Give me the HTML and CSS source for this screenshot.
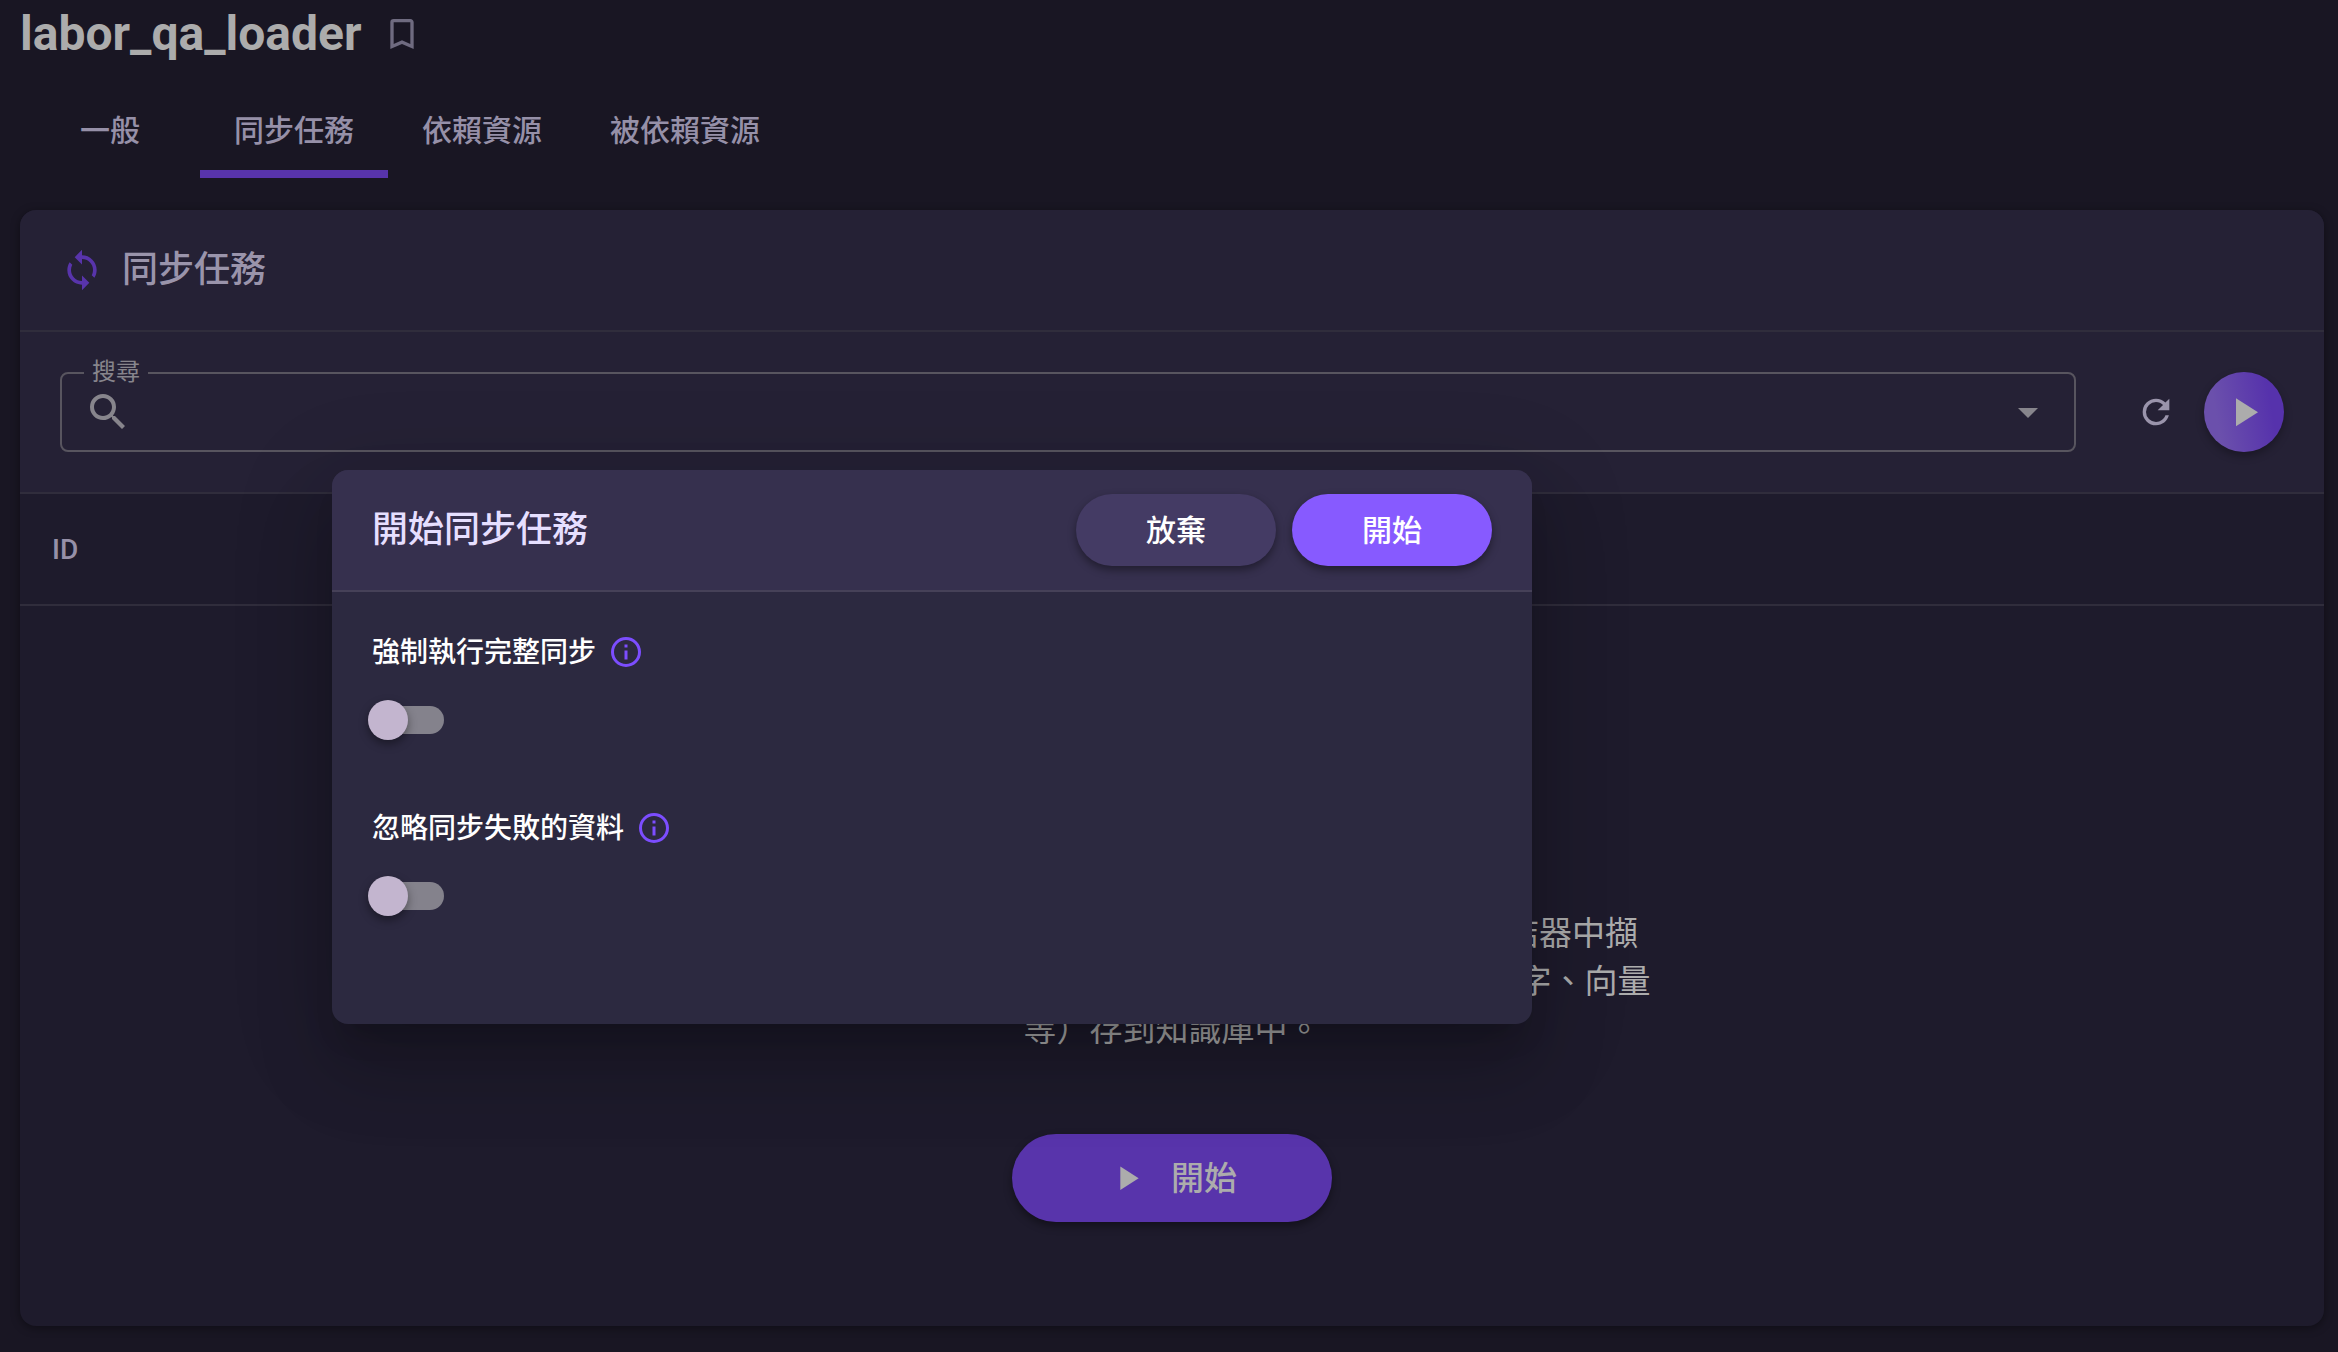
FILE: index.html
```html
<!DOCTYPE html>
<html lang="zh-Hant">

<head>
    <meta charset="UTF-8">
    <meta name="viewport" content="width=device-width, initial-scale=1.0">
    <title>labor_qa_loader</title>
    <link rel="stylesheet" href="styles.css">
</head>

<body>
    <header class="page-header">
        <h1>labor_qa_loader</h1>
        <button class="icon-btn bookmark" aria-label="書籤">
            <svg class="icon icon-40" viewBox="0 0 24 24"><path d="M17,18L12,15.82L7,18V5H17M17,3H7A2,2 0 0,0 5,5V21L12,18L19,21V5C19,3.89 18.1,3 17,3Z"/></svg>
        </button>
    </header>

    <nav class="tabs">
        <a href="#general">一般</a>
        <a href="#sync" class="active">同步任務</a>
        <a href="#deps">依賴資源</a>
        <a href="#dependents">被依賴資源</a>
    </nav>

    <main class="card">
        <div class="card-header">
            <svg class="icon icon-44 sync" viewBox="0 0 24 24"><path d="M12,18A6,6 0 0,1 6,12C6,11 6.25,10.03 6.7,9.2L5.24,7.74C4.46,8.97 4,10.43 4,12A8,8 0 0,0 12,20V23L16,19L12,15M12,4V1L8,5L12,9V6A6,6 0 0,1 18,12C18,13 17.75,13.97 17.3,14.8L18.76,16.26C19.54,15.03 20,13.57 20,12A8,8 0 0,0 12,4Z"/></svg>
            <h2>同步任務</h2>
        </div>

        <div class="toolbar">
            <div class="search">
                <label for="search">搜尋</label>
                <svg class="icon icon-48" viewBox="0 0 24 24"><path d="M9.5,3A6.5,6.5 0 0,1 16,9.5C16,11.11 15.41,12.59 14.44,13.73L14.71,14H15.5L20.5,19L19,20.5L14,15.5V14.71L13.73,14.44C12.59,15.41 11.11,16 9.5,16A6.5,6.5 0 0,1 3,9.5A6.5,6.5 0 0,1 9.5,3M9.5,5C7,5 5,7 5,9.5C5,12 7,14 9.5,14C12,14 14,12 14,9.5C14,7 12,5 9.5,5Z"/></svg>
                <input type="text" id="search" name="search">
                <button class="icon-btn caret" aria-label="展開">
                    <svg class="icon icon-48" viewBox="0 0 24 24"><path d="M7,10L12,15L17,10H7Z"/></svg>
                </button>
            </div>
            <button class="icon-btn refresh" aria-label="重新整理">
                <svg class="icon icon-40" viewBox="0 0 24 24"><path d="M17.65,6.35C16.2,4.9 14.21,4 12,4A8,8 0 0,0 4,12A8,8 0 0,0 12,20C15.73,20 18.84,17.45 19.73,14H17.65C16.83,16.33 14.61,18 12,18A6,6 0 0,1 6,12A6,6 0 0,1 12,6C13.66,6 15.14,6.69 16.22,7.78L13,11H20V4L17.65,6.35Z"/></svg>
            </button>
            <button class="icon-btn run" aria-label="執行">
                <svg class="icon icon-48" viewBox="0 0 24 24"><path d="M8,5.14V19.14L19,12.14L8,5.14Z"/></svg>
            </button>
        </div>

        <table class="tasks">
            <thead>
                <tr>
                    <th scope="col">ID</th>
                </tr>
            </thead>
        </table>

        <div class="empty">
            <p>同步任務會依照資料載入器的設定， 從外部資料來源連結器中擷<br>取資料，經過處理與轉換之後，將處理後的結果（包含文字、向量<br>等）存到知識庫中。</p>
            <button class="start-btn">
                <svg class="icon icon-40" viewBox="0 0 24 24"><path d="M8,5.14V19.14L19,12.14L8,5.14Z"/></svg>
                <span>開始</span>
            </button>
        </div>
    </main>

    <dialog class="modal" open aria-labelledby="modalTitle">
        <div class="modal-header">
            <h2 id="modalTitle">開始同步任務</h2>
            <button class="btn">放棄</button>
            <button class="btn btn-primary">開始</button>
        </div>
        <div class="modal-body">
            <div class="field">
                <div class="field-label">
                    <label for="fullSync">強制執行完整同步</label>
                    <svg class="icon icon-36" viewBox="0 0 24 24"><path d="M11,9H13V7H11M12,20C7.59,20 4,16.41 4,12C4,7.59 7.59,4 12,4C16.41,4 20,7.59 20,12C20,16.41 16.41,20 12,20M12,2A10,10 0 0,0 2,12A10,10 0 0,0 12,22A10,10 0 0,0 22,12A10,10 0 0,0 12,2M11,17H13V11H11V17Z"/></svg>
                </div>
                <input type="checkbox" class="switch" id="fullSync" name="fullSync">
            </div>
            <div class="field">
                <div class="field-label">
                    <label for="ignoreFailed">忽略同步失敗的資料</label>
                    <svg class="icon icon-36" viewBox="0 0 24 24"><path d="M11,9H13V7H11M12,20C7.59,20 4,16.41 4,12C4,7.59 7.59,4 12,4C16.41,4 20,7.59 20,12C20,16.41 16.41,20 12,20M12,2A10,10 0 0,0 2,12A10,10 0 0,0 12,22A10,10 0 0,0 22,12A10,10 0 0,0 12,2M11,17H13V11H11V17Z"/></svg>
                </div>
                <input type="checkbox" class="switch" id="ignoreFailed" name="ignoreFailed">
            </div>
        </div>
    </dialog>
</body>

</html>
```

FILE: styles.css
```css
* {
    box-sizing: border-box;
}

body {
    font-family: Roboto, "Noto Sans CJK TC", sans-serif;
    margin: 0;
    padding: 0 14px 26px 20px;
    background-color: #191623;
    color: #acacac;
    position: relative;
}

h1,
h2,
p {
    margin: 0;
}

button {
    font-family: inherit;
    border: none;
    padding: 0;
    cursor: pointer;
}

.icon {
    display: block;
    flex: none;
    fill: currentColor;
}

.icon-36 {
    width: 36px;
    height: 36px;
}

.icon-40 {
    width: 40px;
    height: 40px;
}

.icon-44 {
    width: 44px;
    height: 44px;
}

.icon-48 {
    width: 48px;
    height: 48px;
}

.icon-btn {
    display: flex;
    align-items: center;
    justify-content: center;
    background: none;
}

/* Page title */
.page-header {
    display: flex;
    align-items: center;
    gap: 20px;
    height: 68px;
}

.page-header h1 {
    font-size: 48px;
    font-weight: 700;
    line-height: 64px;
}

.bookmark {
    color: #6f6b80;
}

/* Tabs */
.tabs {
    display: flex;
    margin-top: 14px;
}

.tabs a {
    min-width: 180px;
    height: 96px;
    padding: 8px 34px 0;
    border-bottom: 8px solid transparent;
    font-size: 30px;
    font-weight: 500;
    line-height: 82px;
    text-align: center;
    text-decoration: none;
    color: #9690a8;
}

.tabs a.active {
    border-bottom-color: #5834ab;
}

/* Card */
.card {
    margin-top: 32px;
    border-radius: 16px;
    overflow: hidden;
    background-color: #1e1b2c;
    box-shadow: 0 2px 10px rgba(0, 0, 0, 0.4);
}

.card-header {
    display: flex;
    align-items: center;
    gap: 18px;
    height: 122px;
    padding: 0 40px;
    background-color: #252135;
    border-bottom: 2px solid #302d3c;
}

.card-header h2 {
    font-size: 36px;
    font-weight: 500;
    line-height: 48px;
    color: #9a94ab;
}

.sync {
    color: #5834ab;
}

.toolbar {
    display: flex;
    align-items: center;
    padding: 40px;
    background-color: #252135;
    border-bottom: 2px solid #302d3c;
}

.search {
    position: relative;
    display: flex;
    align-items: center;
    flex: 1;
    height: 80px;
    padding: 0 22px;
    border: 2px solid #58555f;
    border-radius: 8px;
    color: #87858c;
}

/* Label sits on top of the outline */
.search label {
    position: absolute;
    top: -18px;
    left: 22px;
    padding: 0 8px;
    font-size: 24px;
    line-height: 32px;
    background-color: #252135;
}

.search input {
    flex: 1;
    height: 64px;
    padding: 0 12px;
    border: none;
    outline: none;
    background: none;
    font-family: inherit;
    font-size: 32px;
    color: #acacac;
}

.caret {
    color: inherit;
}

.refresh {
    width: 72px;
    height: 72px;
    margin: 0 12px 0 44px;
    color: #9a94ab;
}

.run {
    width: 80px;
    height: 80px;
    border-radius: 50%;
    background: linear-gradient(80deg, #6b50ac 20%, #5632ac 80%);
    box-shadow: 0 4px 8px rgba(0, 0, 0, 0.3);
    color: #acacac;
}

.tasks {
    width: 100%;
    border-spacing: 0;
}

.tasks th {
    height: 112px;
    padding: 0 32px;
    border-bottom: 2px solid #302d3c;
    font-size: 28px;
    font-weight: 500;
    text-align: left;
    color: #9690a8;
}

/* Empty state */
.empty {
    display: flex;
    flex-direction: column;
    align-items: center;
    gap: 80px;
    padding: 304px 40px 104px;
}

.empty p {
    font-size: 33px;
    line-height: 48px;
    text-align: center;
}

.start-btn {
    display: flex;
    align-items: center;
    justify-content: center;
    gap: 24px;
    width: 320px;
    height: 88px;
    border-radius: 44px;
    background-color: #5834ab;
    box-shadow: 0 4px 8px rgba(0, 0, 0, 0.4);
    font-size: 33px;
    font-weight: 500;
    color: #acacac;
}

.start-btn span {
    padding-bottom: 4px;
}

/* Modal */
.modal {
    position: absolute;
    top: 470px;
    left: 332px;
    width: 1200px;
    margin: 0;
    padding: 0;
    border: none;
    border-radius: 16px;
    overflow: hidden;
    background-color: #2c2940;
    box-shadow: 0 22px 30px -14px rgba(0, 0, 0, 0.2), 0 48px 76px 6px rgba(0, 0, 0, 0.14), 0 18px 92px 16px rgba(0, 0, 0, 0.12);
    color: #fff;
}

.modal-header {
    display: flex;
    align-items: center;
    gap: 16px;
    height: 122px;
    padding: 0 40px;
    background-color: #36304e;
    border-bottom: 2px solid #464158;
}

.modal-header h2 {
    flex: 1;
    font-size: 36px;
    font-weight: 500;
    line-height: 48px;
    color: #e6dfff;
}

.btn {
    width: 200px;
    height: 72px;
    padding-bottom: 4px;
    border-radius: 36px;
    background-color: #443b64;
    box-shadow: 0 4px 8px rgba(0, 0, 0, 0.4);
    font-size: 30px;
    font-weight: 500;
    color: #fff;
}

.btn-primary {
    background-color: #875aff;
}

.modal-body {
    display: flex;
    flex-direction: column;
    gap: 64px;
    padding: 40px 40px 104px;
}

.field {
    height: 112px;
}

.field-label {
    display: flex;
    align-items: center;
    gap: 12px;
    height: 40px;
    font-size: 28px;
    font-weight: 500;
    color: #fff;
}

.field-label label {
    padding-bottom: 4px;
}

.field-label .icon {
    color: #7c4dff;
}

.switch {
    appearance: none;
    display: flex;
    align-items: center;
    width: 72px;
    height: 28px;
    margin: 34px 0 0;
    border-radius: 14px;
    background-color: #84828c;
    cursor: pointer;
}

.switch::before {
    content: "";
    width: 40px;
    height: 40px;
    margin-left: -4px;
    border-radius: 50%;
    background-color: #c3b5cf;
    box-shadow: 0 4px 10px rgba(0, 0, 0, 0.4);
}

.switch:checked::before {
    margin-left: 36px;
    background-color: #875aff;
}
```
